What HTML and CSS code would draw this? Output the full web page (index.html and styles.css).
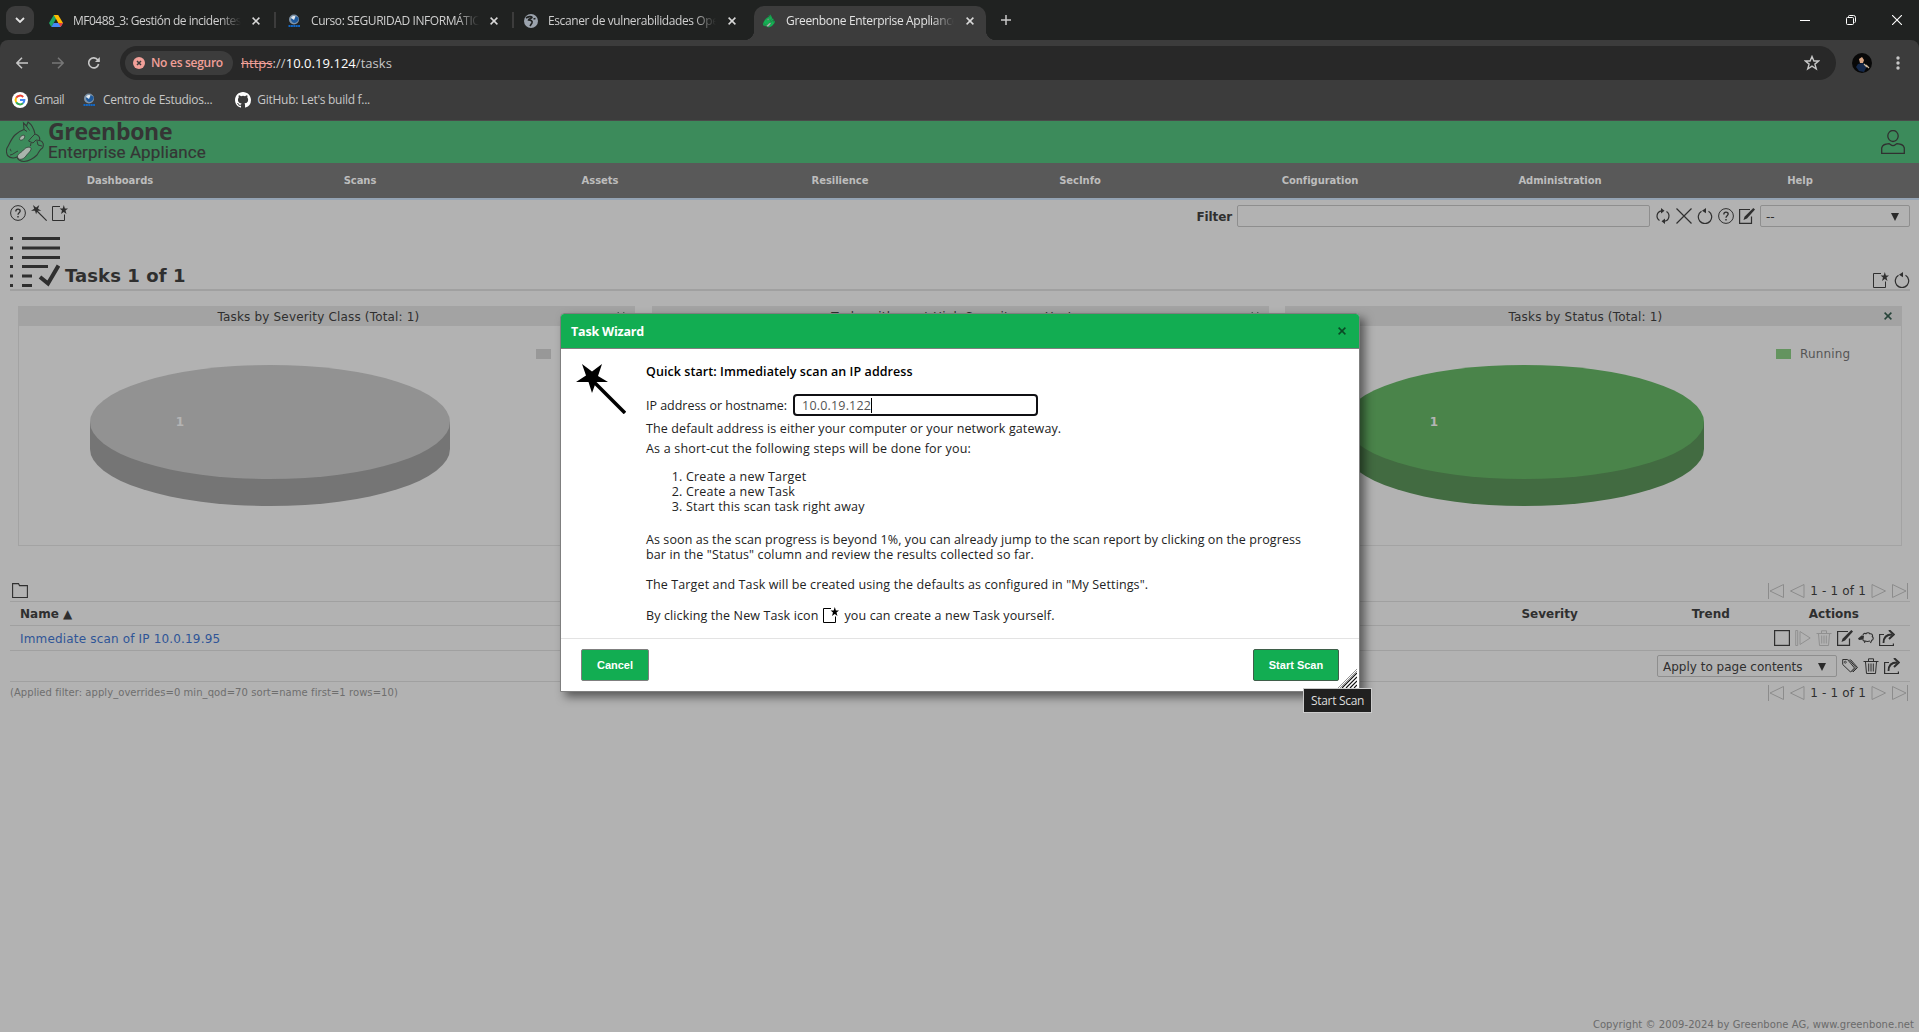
FILE: index.html
```html
<!DOCTYPE html>
<html lang="en">
<head>
<meta charset="utf-8">
<title>Greenbone Enterprise Appliance</title>
<link rel="stylesheet" href="styles.css">
</head>
<body>
<svg class="defs" width="0" height="0" aria-hidden="true">
  <defs>
    <symbol id="i-help" viewBox="0 0 16 16"><circle cx="8" cy="8" r="7.4" fill="none" stroke="currentColor"/><path d="M5.800 6.400C5.800 3.400 10.200 3.500 10.200 6.100C10.200 7.800 8 7.900 8 9.800" fill="none" stroke="currentColor" stroke-width="1.300"/><rect x="7.300" y="11" width="1.400" height="1.500" fill="currentColor"/></symbol>
    <symbol id="i-wand" viewBox="0 0 50 50"><path d="M6 0L16 7.500L26 0L22 12L32 18H20L16 29L12.500 18H0L10 11.500Z" fill="currentColor"/><path d="M18 18L49 49" stroke="currentColor" stroke-width="3.500"/></symbol>
    <symbol id="i-new" viewBox="0 0 16 16"><path d="M8 1.500H.5V15.500H12.500V9.500" fill="none" stroke="currentColor"/><path d="M11.800 0L12.900 3.500H16L13.500 5.500L14.500 9L11.800 7L9 9L10 5.500L7.600 3.500H10.700Z" fill="currentColor"/></symbol>
    <symbol id="i-update" viewBox="0 0 16 16"><path d="M6.500 2.800A5.300 5.300 0 0 0 4.500 12.500M9.500 13.200A5.300 5.300 0 0 0 11.500 3.500" fill="none" stroke="currentColor" stroke-width="1.200"/><path d="M6 0L9.500 2.700L6 5.500ZM10 10.500L6.500 13.300L10 16Z" fill="currentColor"/></symbol>
    <symbol id="i-x" viewBox="0 0 16 16"><path d="M.5 .5L15.500 15.500M15.500 .5L.5 15.500" stroke="currentColor" stroke-width="1.200"/></symbol>
    <symbol id="i-reset" viewBox="0 0 16 16"><path d="M4.500 3.200A6.700 6.700 0 1 0 11.500 3.200" fill="none" stroke="currentColor" stroke-width="1.200"/><path d="M5 2.800L9 0V5.200Z" fill="currentColor"/></symbol>
    <symbol id="i-edit" viewBox="0 0 16 16"><path d="M11 1.500H.6V15.400H12.500V8.500" fill="none" stroke="currentColor" stroke-width="1.200"/><path d="M14.300 0L16 1.600L8 10.500L4.500 12L5.500 8.800Z" fill="currentColor"/></symbol>
    <symbol id="i-trash" viewBox="0 0 16 16"><path d="M.5 3.500H15.500M5.500 3V.8H10.500V3M2.500 4L3.500 15.500H12.500L13.500 4M5.700 5.500V13.500M8 5.500V13.500M10.300 5.500V13.500" fill="none" stroke="currentColor"/></symbol>
    <symbol id="i-play" viewBox="0 0 16 16"><path d="M.7 .5V15.500H2.700V.5ZM5 1.500V14.500L15.200 8Z" fill="none" stroke="currentColor"/></symbol>
    <symbol id="i-sheep" viewBox="0 0 16 16"><path d="M5 5.500C5 3.500 7 3 8 3.700C9 2.500 11 2.500 12 3.800C14 3.500 15 5 14.300 6.500C16 8 15 10 13.800 10.200C13.500 11.500 13 11.500 12.500 13M6.500 12.800L7 11C9 11.800 10.500 11.500 12 11M5 9.500C5 11 6 11.200 7 11" fill="none" stroke="currentColor" stroke-width="1.100"/><path d="M0 8.500L3.500 5.500L6 6L5.500 9.500L1 10Z" fill="currentColor"/></symbol>
    <symbol id="i-export" viewBox="0 0 16 16"><path d="M5 4.500H.6V15.500H14.400V13.500" fill="none" stroke="currentColor" stroke-width="1.200"/><path d="M4.500 13C4.500 7.500 7.500 4.500 13 4.500" fill="none" stroke="currentColor" stroke-width="1.800"/><path d="M10 0L14.800 4.500L10 9" fill="none" stroke="currentColor" stroke-width="2"/></symbol>
    <symbol id="i-tag" viewBox="0 0 16 16"><path d="M.7 1.500V6.500L8.500 14L12.500 10L5.500 1.500Z" fill="none" stroke="currentColor"/><path d="M7 1.500L14 9.500L9.500 14M8.500 1.500L15.500 9.500L11 14" fill="none" stroke="currentColor"/><circle cx="3.300" cy="4.200" r="1" fill="none" stroke="currentColor" stroke-width=".8"/></symbol>
    <symbol id="i-first" viewBox="0 0 16 16"><path d="M.5 0V16M15.500 1.500V14.500L2 8Z" fill="none" stroke="currentColor"/></symbol>
    <symbol id="i-prev" viewBox="0 0 16 16"><path d="M15 1.500V14.500L1.500 8Z" fill="none" stroke="currentColor"/></symbol>
    <symbol id="i-next" viewBox="0 0 16 16"><path d="M1 1.500V14.500L14.500 8Z" fill="none" stroke="currentColor"/></symbol>
    <symbol id="i-last" viewBox="0 0 16 16"><path d="M15.500 0V16M.5 1.500V14.500L14 8Z" fill="none" stroke="currentColor"/></symbol>
    <symbol id="i-close" viewBox="0 0 8 8"><path d="M.6 .6L7.400 7.400M7.400 .6L.6 7.400" stroke="currentColor" stroke-width="1.500"/></symbol>
    <symbol id="i-globe" viewBox="0 0 14 14"><circle cx="7" cy="5.500" r="5" fill="#7d93a8"/><path d="M4 5C5 2 9 1 11.500 4C12 7 9 9 7 9C5 8.500 4 7 4 5Z" fill="#1f5a9c"/><path d="M4 4C5 2 7 1.500 8.500 2.500L7 6Z" fill="#e2e8ee"/><path d="M1.500 12H13" stroke="#1267c4" stroke-width="2" stroke-dasharray="2 .4"/></symbol>
    <symbol id="i-horse" viewBox="0 0 38 42"><path d="M1 27C3 24 5 18 9 14C12 11 15 9.500 18 8.500L17.500 2L20.500 5L22 1C25 3 28 8 29 13C32 14 34.500 16 33.500 19.500C37.500 20 38 24 36.500 27C34 28 33 31 31 34C28 37 23 40 18 40.500C14 40.500 11.500 38 11 36C8 37.500 4 37 1.500 34.500C.3 32 .3 29 1 27Z" class="horse-skin"/><path d="M18 8.500L21 10.500M20.500 5L23.500 9.500M29 13L25 17L22.500 20L27 22L30 19L33.500 19.500M31 20L32 24L36 25M25 22L24.500 25M5 28C4 28 4 30 5.500 30M4 34C7 34 9 31 12 30" fill="none" class="horse-line"/><path d="M11.500 36C11 33 15 32 17.500 29C20 26 23.500 25.500 25 27C25.500 30 22 32 20 35C17 39 12.500 39.500 11.500 36ZM13.500 18.500C13.500 15.500 17 13.500 18.500 14.500C19.500 17 16 20.500 13.500 18.500Z" class="horse-bone"/></symbol>
  </defs>
</svg>

<header class="browser">
  <div class="tabstrip">
    <div class="tabsearch"><svg width="10" height="6" viewBox="0 0 10 6"><path d="M1 1L5 5L9 1" fill="none" stroke="#e3e3e3" stroke-width="1.800"/></svg></div>
    <div class="tab tab-a">
      <svg class="fav" viewBox="0 0 14 14"><path d="M4.800 1H9.200L4.700 9L2.300 13L0 9Z" fill="#1fa463"/><path d="M4.800 1H9.200L14 9H9.300Z" fill="#ffba00"/><path d="M2.300 13L4.600 9H14L11.700 13Z" fill="#4688f4"/><path d="M9.300 9H14L11.700 13Z" fill="#ea4335"/></svg>
      <span class="tab-title">MF0488_3: Gestión de incidentes</span><svg class="tab-x"><use href="#i-close"/></svg>
    </div>
    <div class="tab tab-b">
      <svg class="fav"><use href="#i-globe"/></svg>
      <span class="tab-title">Curso: SEGURIDAD INFORMÁTICA</span><svg class="tab-x"><use href="#i-close"/></svg>
    </div>
    <div class="tab tab-c">
      <svg class="fav" viewBox="0 0 14 14"><circle cx="7" cy="7" r="7" fill="#9ba3ad"/><path d="M2 4C4 2.500 8 2 8 3.500C7 5 4.500 4.500 4.500 6C7 6 8.800 7 8 9L6 12M11.500 4.500L9.500 5" fill="none" stroke="#202221" stroke-width="1.600"/></svg>
      <span class="tab-title">Escaner de vulnerabilidades Open</span><svg class="tab-x"><use href="#i-close"/></svg>
    </div>
    <div class="tab tab-active">
      <svg class="fav horse-fav"><use href="#i-horse"/></svg>
      <span class="tab-title">Greenbone Enterprise Appliance</span><svg class="tab-x"><use href="#i-close"/></svg>
    </div>
    <svg class="newtab" viewBox="0 0 10 10"><path d="M5 0V10M0 5H10" stroke="#c8c8c8" stroke-width="1.500"/></svg>
    <div class="winctl">
      <svg width="10" height="10"><path d="M0 5.500H10" stroke="#fff"/></svg>
      <svg width="10" height="10" viewBox="0 0 10 10"><path d="M2.500 2V1.500Q2.500 .5 3.500 .5H7.500Q9.500 .5 9.500 2.500V6.500Q9.500 7.500 8.500 7.500" fill="none" stroke="#fff"/><rect x=".5" y="2.500" width="7" height="7" rx="1" fill="none" stroke="#fff"/></svg>
      <svg width="10" height="10"><path d="M0 0L10 10M10 0L0 10" stroke="#fff" stroke-width="1.100"/></svg>
    </div>
  </div>
  <div class="toolbar">
    <svg class="nav-back" viewBox="0 0 12 12"><path d="M12 6H1M6 .7L.9 6L6 11.300" fill="none" stroke="#c7c7c7" stroke-width="1.500"/></svg>
    <svg class="nav-fwd" viewBox="0 0 12 12"><path d="M0 6H11M6 .7L11.100 6L6 11.300" fill="none" stroke="#777" stroke-width="1.500"/></svg>
    <svg class="nav-reload" viewBox="0 0 12 12"><path d="M10.600 7A5 5 0 1 1 9.800 3L11 4.200" fill="none" stroke="#c7c7c7" stroke-width="1.600"/><path d="M11.800 0V5H7Z" fill="#c7c7c7"/></svg>
    <div class="omnibox">
      <div class="chip"><svg width="12" height="12"><circle cx="6" cy="6" r="6" fill="#f2a099"/><path d="M4 4L8 8M8 4L4 8" stroke="#3c3c3c" stroke-width="1.500"/></svg><span>No es seguro</span></div>
      <span class="url"><s>https</s><i>://</i><b>10.0.19.124</b><i>/tasks</i></span>
      <svg class="star" viewBox="0 0 16 16"><path d="M8 1.500L9.900 6H14.700L10.900 9.100L12.300 14L8 11.200L3.700 14L5.100 9.100L1.300 6H6.100Z" fill="none" stroke="#c7c7c7" stroke-width="1.400"/></svg>
    </div>
    <svg class="avatar" viewBox="0 0 20 20"><circle cx="10" cy="10" r="10" fill="#080808"/><path d="M6 11L11 10L15 13L12 19L7 18L4 14Z" fill="#14284a"/><path d="M7 6L10 4L12 7L11 10L8 10Z" fill="#d9a584"/><path d="M14 12L17 15M12 11L15 14" stroke="#cbb79c" stroke-width="1.200"/></svg>
    <svg class="kebab" width="4" height="14"><circle cx="2" cy="2" r="1.700" fill="#c7c7c7"/><circle cx="2" cy="7" r="1.700" fill="#c7c7c7"/><circle cx="2" cy="12" r="1.700" fill="#c7c7c7"/></svg>
  </div>
  <div class="bookmarks">
    <div class="bm bm-1"><svg width="16" height="16" viewBox="0 0 16 16"><circle cx="8" cy="8" r="8" fill="#fff"/><g fill="none" stroke-width="2"><path d="M4.200 5.800A4.400 4.400 0 0 1 11.200 5" stroke="#ea4335"/><path d="M4.200 5.800A4.400 4.400 0 0 0 4.200 10.200" stroke="#fbbc05"/><path d="M4.200 10.200A4.400 4.400 0 0 0 11 11.200" stroke="#34a853"/><path d="M11 11.200A4.400 4.400 0 0 0 12.400 8H8" stroke="#4285f4"/></g></svg><span>Gmail</span></div>
    <div class="bm bm-2"><svg width="14" height="14"><use href="#i-globe"/></svg><span>Centro de Estudios...</span></div>
    <div class="bm bm-3"><svg width="16" height="16" viewBox="0 0 16 16"><path fill="#fff" d="M8 0C3.580 0 0 3.580 0 8c0 3.540 2.290 6.530 5.470 7.590.4.070.55-.17.55-.38v-1.490c-2.010.37-2.530-.49-2.690-.94-.09-.23-.48-.94-.82-1.130-.28-.15-.68-.52-.01-.53.63-.01 1.080.58 1.230.82.72 1.210 1.870.87 2.330.66.07-.52.28-.87.51-1.070-1.780-.2-3.640-.89-3.640-3.950 0-.87.31-1.590.82-2.150-.08-.2-.36-1.020.08-2.120 0 0 .67-.21 2.200.82a7.600 7.600 0 0 1 4 0c1.530-1.040 2.200-.82 2.200-.82.44 1.100.16 1.920.08 2.120.51.560.82 1.270.82 2.150 0 3.070-1.870 3.750-3.650 3.950.29.250.54.730.54 1.480v2.200c0 .21.15.46.55.38A8 8 0 0 0 16 8c0-4.420-3.580-8-8-8Z"/></svg><span>GitHub: Let's build f...</span></div>
  </div>
</header>

<div class="brandbar">
  <svg class="brand-horse"><use href="#i-horse"/></svg>
  <div class="brand"><div class="brand-1">Greenbone</div><div class="brand-2">Enterprise Appliance</div></div>
  <svg class="user" viewBox="0 0 24 24"><ellipse cx="12" cy="6" rx="5.200" ry="5.500" fill="none" stroke="currentColor" stroke-width="1.300"/><path d="M.7 23.300V18C1.500 14.500 4 14 8 13.700C9 13.700 10 15.500 12 15.700C14 15.500 15 13.700 16 13.700C20 14 22.500 14.500 23.300 18V23.300Z" fill="none" stroke="currentColor" stroke-width="1.300"/></svg>
</div>
<nav class="menu"><a>Dashboards</a><a>Scans</a><a>Assets</a><a>Resilience</a><a>SecInfo</a><a>Configuration</a><a>Administration</a><a>Help</a></nav>

<main class="page">
  <div class="topline">
    <div class="icons"><svg><use href="#i-help"/></svg><svg><use href="#i-wand"/></svg><svg><use href="#i-new"/></svg></div>
    <div class="filter">
      <b class="filter-label">Filter</b><div class="field"></div>
      <div class="icons"><svg><use href="#i-update"/></svg><svg><use href="#i-x"/></svg><svg><use href="#i-reset"/></svg><svg><use href="#i-help"/></svg><svg><use href="#i-edit"/></svg></div>
      <div class="select select-filter"><span>--</span><i class="caret"></i></div>
    </div>
  </div>

  <div class="section">
    <svg class="section-icon" viewBox="0 0 50 50"><path d="M0 1.500H3M0 11H3M0 20.500H3M0 29.500H3M0 39H3M0 48.500H3" stroke="currentColor" stroke-width="3"/><path d="M12 1.500H50M12 11H50M12 20.500H50M12 29.500H38M12 39H22M12 48.500H22" stroke="currentColor" stroke-width="3"/><path d="M30 40L38 46.500L48.500 28.500" fill="none" stroke="currentColor" stroke-width="4"/></svg>
    <h1>Tasks 1 of 1</h1>
    <div class="icons"><svg><use href="#i-new"/></svg><svg><use href="#i-reset"/></svg></div>
  </div>

  <div class="charts">
    <section class="chart">
      <div class="chart-head"><span>Tasks by Severity Class (Total: 1)</span><svg><use href="#i-close"/></svg></div>
      <svg class="pie" viewBox="0 0 615 219"><path d="M71 96V123A180 57 0 0 0 431 123V96Z" fill="#757575"/><ellipse cx="251" cy="96" rx="180" ry="57" fill="#929292"/><text x="161" y="100">1</text><rect x="517" y="23" width="15" height="10" fill="#989898"/></svg>
    </section>
    <section class="chart">
      <div class="chart-head"><span>Tasks with most High Severity per Host</span><svg><use href="#i-close"/></svg></div>
    </section>
    <section class="chart">
      <div class="chart-head"><span>Tasks by Status (Total: 1)</span><svg><use href="#i-close"/></svg></div>
      <svg class="pie" viewBox="0 0 615 219"><path d="M58 96V123A180 57 0 0 0 418 123V96Z" fill="#426b41"/><ellipse cx="238" cy="96" rx="180" ry="57" fill="#4a844a"/><text x="148" y="100">1</text><rect x="490" y="23" width="15" height="10" fill="#64945f"/><text class="legend" x="514" y="32">Running</text></svg>
    </section>
  </div>

  <div class="listbar">
    <svg class="folder" viewBox="0 0 16 16"><path d="M.6 14.500V.6H6.500L7.500 2.600H15.400V14.500Z" fill="none" stroke="currentColor" stroke-width="1.100"/></svg>
    <div class="pager"><svg><use href="#i-first"/></svg><svg><use href="#i-prev"/></svg><span>1 - 1 of 1</span><svg><use href="#i-next"/></svg><svg><use href="#i-last"/></svg></div>
  </div>
  <div class="row row-head"><span>Name ▲</span><span class="c-sev">Severity</span><span class="c-trend">Trend</span><span class="c-act">Actions</span></div>
  <div class="row row-item"><span class="link">Immediate scan of IP 10.0.19.95</span>
    <div class="icons"><svg viewBox="0 0 16 16"><rect x=".6" y=".6" width="14.800" height="14.800" fill="none" stroke="currentColor" stroke-width="1.200"/></svg><svg class="off"><use href="#i-play"/></svg><svg class="off"><use href="#i-trash"/></svg><svg><use href="#i-edit"/></svg><svg><use href="#i-sheep"/></svg><svg><use href="#i-export"/></svg></div>
  </div>
  <div class="row row-bulk"><div class="select select-bulk"><span>Apply to page contents</span><i class="caret"></i></div><div class="icons"><svg><use href="#i-tag"/></svg><svg><use href="#i-trash"/></svg><svg><use href="#i-export"/></svg></div></div>
  <div class="listfoot">
    <span class="applied">(Applied filter: apply_overrides=0 min_qod=70 sort=name first=1 rows=10)</span>
    <div class="pager"><svg><use href="#i-first"/></svg><svg><use href="#i-prev"/></svg><span>1 - 1 of 1</span><svg><use href="#i-next"/></svg><svg><use href="#i-last"/></svg></div>
  </div>
  <footer class="copyright">Copyright © 2009-2024 by Greenbone AG, www.greenbone.net</footer>
</main>

<div class="dialog">
  <div class="dlg-head"><b>Task Wizard</b><svg><use href="#i-close"/></svg></div>
  <div class="dlg-body">
    <svg class="dlg-wand"><use href="#i-wand"/></svg>
    <div class="dlg-text">
      <p class="lead">Quick start: Immediately scan an IP address</p>
      <div class="host"><span>IP address or hostname:</span><div class="hostfield"><span>10.0.19.122</span><i class="cursor"></i></div></div>
      <p class="l1">The default address is either your computer or your network gateway.</p>
      <p class="l2">As a short-cut the following steps will be done for you:</p>
      <ol><li>Create a new Target</li><li>Create a new Task</li><li>Start this scan task right away</li></ol>
      <p class="l3">As soon as the scan progress is beyond 1%, you can already jump to the scan report by clicking on the progress<br><span>bar in the "Status" column and review the results collected so far.</span></p>
      <p class="l4">The Target and Task will be created using the defaults as configured in "My Settings".</p>
      <p class="l5"><span>By clicking the New Task icon</span><svg><use href="#i-new"/></svg><span>you can create a new Task yourself.</span></p>
    </div>
  </div>
  <div class="dlg-foot"><button class="btn">Cancel</button><button class="btn btn-go">Start Scan</button></div>
  <svg class="grip" viewBox="0 0 19 19"><path d="M4 19L19 4M8 19L19 8M12 19L19 12M16 19L19 16" stroke="#111" stroke-width="1.200"/><path d="M0 19L19 0M2 19L19 2" stroke="#777" stroke-width=".8"/></svg>
  <div class="tip">Start Scan</div>
</div>
</body>
</html>
```
FILE: styles.css
```css
* { box-sizing: border-box; }
body { margin: 0; width: 1919px; height: 1032px; overflow: hidden; position: relative; background: #b2b2b2; color: #2f2f2f; font: 12px/16px "DejaVu Sans", Verdana, sans-serif; letter-spacing: .17px; }
svg { display: block; flex: none; }
.defs { position: absolute; }
p, h1, ol { margin: 0; }

/* browser window */
.browser { height: 121px; background: #202221; font: 12px/16px "Open Sans", "Segoe UI", sans-serif; color: #c7c7c7; letter-spacing: -.28px; }
.tabstrip { height: 40px; display: flex; align-items: flex-start; }
.tabsearch { width: 28px; height: 28px; margin: 6px 0 0 6px; border-radius: 9px; background: #3c3c3c; display: grid; place-items: center; flex: none; }
.tab { display: flex; align-items: center; flex: none; width: 238px; height: 34px; margin-top: 6px; position: relative; padding-bottom: 4px; }
.tab-a { margin-left: 4px; padding-left: 11px; letter-spacing: -.5px; }
.tab-b { padding-left: 11px; letter-spacing: -.42px; }
.tab-a::after, .tab-b::after { content: ""; position: absolute; right: 0; top: 6px; width: 2px; height: 16px; background: #3c3c3c; }
.tab-c { width: 240px; padding-left: 10px; letter-spacing: -.4px; }
.tab-active { width: 232px; padding-left: 8px; background: #3c3c3c; border-radius: 10px 10px 0 0; letter-spacing: -.33px; }
.tab-active::before, .tab-active::after { content: ""; position: absolute; bottom: 0; width: 10px; height: 10px; }
.tab-active::before { left: -10px; background: radial-gradient(circle at 0 0, transparent 10px, #3c3c3c 10.500px); }
.tab-active::after { right: -10px; background: radial-gradient(circle at 100% 0, transparent 10px, #3c3c3c 10.500px); }
.fav { width: 14px; height: 14px; }
.tab-title { width: 168px; margin-left: 10px; overflow: hidden; white-space: nowrap; color: #cfcfcf; mask-image: linear-gradient(90deg, #000 146px, transparent 168px); }
.tab-active .tab-title { color: #e3e3e3; }
.tab-x { width: 8px; height: 8px; margin-left: 11px; color: #d8d8d8; }
.tab-c .tab-x, .tab-active .tab-x { margin-left: 12px; }
.newtab { width: 10px; height: 10px; margin: 15px 0 0 15px; }
.winctl { margin: 15px 17px 0 auto; display: flex; gap: 36px; }
.toolbar { height: 46px; background: #3c3c3c; border-radius: 8px 8px 0 0; padding-top: 6px; display: flex; align-items: flex-start; }
.nav-back, .nav-fwd, .nav-reload { width: 12px; height: 12px; margin-top: 11px; }
.nav-back { margin-left: 16px; }
.nav-fwd { margin-left: 24px; }
.nav-reload { margin-left: 24px; }
.omnibox { margin-left: 20px; width: 1716px; height: 34px; border-radius: 17px; background: #282828; display: flex; align-items: center; padding-left: 5px; }
.chip { width: 108px; height: 24px; border-radius: 12px; background: #3c3c3c; display: flex; align-items: center; padding-left: 8px; gap: 6px; color: #f2a099; font-weight: 600; white-space: nowrap; }
.url { margin-left: 8px; font-size: 13px; white-space: nowrap; letter-spacing: .04px; }
.url s { color: #f2a099; }
.url i { font-style: normal; color: #c7c7c7; }
.url b { font-weight: 400; color: #fff; }
.star { width: 16px; height: 16px; margin: 0 16px 0 auto; }
.avatar { width: 20px; height: 20px; margin: 7px 0 0 16px; }
.kebab { margin: 10px 0 0 24px; }
.bookmarks { height: 35px; background: #3c3c3c; border-bottom: 1px solid #4a4a4a; display: flex; align-items: flex-start; padding: 6px 0 0 12px; }
.bm { display: flex; align-items: center; gap: 6px; height: 16px; white-space: nowrap; }
.bm-1 { letter-spacing: -.5px; }
.bm-2 { margin-left: 18px; gap: 7px; }
.bm-3 { margin-left: 23px; }

/* product header */
.brandbar { height: 42px; background: #3c8b5b; display: flex; color: #353535; }
.brand-horse { width: 38px; height: 42px; margin-left: 6px; }
.horse-skin { fill: var(--skin, #3c8b5b); stroke: #353d38; stroke-width: 1.100; }
.horse-line { stroke: #353d38; stroke-width: 1; }
.horse-bone { fill: #a9b5ac; stroke: #353d38; stroke-width: .8; }
.horse-fav { --skin: #14b053; }
.brand { margin-left: 4px; white-space: nowrap; letter-spacing: 0; }
.brand-1 { font: 700 23px/21px "Open Sans", sans-serif; letter-spacing: -.3px; height: 21px; }
.brand-2 { font: 400 17px/18px Roboto, sans-serif; letter-spacing: .1px; margin-top: 1px; -webkit-text-stroke: .2px; }
.user { width: 24px; height: 24px; margin: 9px 14px 0 auto; color: #303030; }
.menu { height: 37px; background: #595959; border-bottom: 2px solid #94a3b3; display: grid; grid-template-columns: repeat(8, 240px); font: 700 10px/35px "DejaVu Sans", sans-serif; letter-spacing: -.05px; color: #bdbdbd; text-align: center; }

/* page content */
.page { height: 832px; padding: 5px 9px 0 10px; display: flex; flex-direction: column; }
.icons { display: flex; gap: 5px; }
.icons svg { width: 16px; height: 16px; }
.topline { display: flex; justify-content: space-between; height: 32px; flex: none; }
.filter { display: flex; align-items: flex-start; }
.filter .icons { margin: 3px 5px 0 5px; }
.filter-label { margin: 4px 5px 0 0; letter-spacing: -.1px; }
.field { width: 413px; height: 22px; border: 1px solid #8e8e8e; border-radius: 2px; }
.select { height: 22px; border: 1px solid #8e8e8e; border-radius: 2px; display: flex; justify-content: space-between; align-items: center; padding: 1px 10px 0 5px; white-space: nowrap; letter-spacing: 0; }
.select-filter { width: 150px; }
.caret { width: 0; border: 4px solid transparent; border-top: 8px solid #2a2a2a; border-bottom: 0; }
.section { height: 54px; flex: none; border-bottom: 2px solid #a0a0a0; display: flex; align-items: flex-start; }
.section-icon { width: 50px; height: 50px; }
h1 { font-size: 18px; line-height: 24px; letter-spacing: .1px; margin: 27px auto 0 5px; white-space: nowrap; }
.section .icons { margin-top: 35px; }
.charts { display: flex; gap: 16.500px; margin: 15px 0 0 8px; flex: none; }
.chart { width: 617px; height: 240px; border: 1px solid #a3a3a3; }
.chart-head { height: 19px; background: #a3a3a3; display: flex; align-items: center; justify-content: center; position: relative; white-space: nowrap; padding-right: 16px; }
.chart-head svg { position: absolute; right: 9px; top: 5px; width: 8px; height: 8px; color: #27443a; }
.pie { width: 615px; height: 219px; }
.pie text { font: 700 12px "DejaVu Sans", sans-serif; fill: #b4b4b4; text-anchor: middle; }
.pie .legend { font-weight: 400; fill: #555; text-anchor: start; }
.listbar { height: 55px; flex: none; display: flex; justify-content: space-between; align-items: flex-end; padding: 0 2px 2px; }
.folder { width: 16px; height: 16px; }
.pager { display: flex; align-items: center; gap: 5px; white-space: nowrap; }
.pager span { padding-top: 1px; line-height: 15px; }
.pager svg { width: 16px; height: 16px; color: #8c8c8c; }
.row { border-top: 1px solid #a0a0a0; display: flex; align-items: center; flex: none; white-space: nowrap; }
.row-head { height: 24px; font-weight: 700; padding-left: 10px; letter-spacing: 0; }
.c-sev { margin-left: auto; }
.c-trend { margin-left: 114px; }
.c-act { margin: 0 51px 0 79px; }
.row-item { height: 25px; justify-content: space-between; padding: 0 15px 0 10px; }
.link { color: #2f5597; padding-top: 2px; }
.off { color: #909090; }
.row-bulk { height: 32px; justify-content: flex-end; padding-right: 10px; gap: 5px; border-bottom: 1px solid #a0a0a0; }
.select-bulk { width: 180px; }
.listfoot { display: flex; justify-content: space-between; align-items: center; height: 22px; padding-right: 2px; }
.applied { font-size: 10px; color: #6e6e6e; white-space: nowrap; letter-spacing: .06px; }
.copyright { margin: auto -4px -1px auto; font-size: 10px; line-height: 16px; color: #6a6a6a; white-space: nowrap; letter-spacing: .06px; }

/* wizard dialog, over the page */
.dialog { position: absolute; left: 560px; top: 313px; width: 800px; height: 379px; background: #fff; border: 1px solid #7f7f7f; border-radius: 4px 4px 0 0; box-shadow: 5px 5px 10px rgba(0,0,0,.5); color: #222; font: 12.500px/15px "Open Sans", "Trebuchet MS", sans-serif; letter-spacing: .12px; white-space: nowrap; }
.dlg-head { height: 35px; background: #12ad52; border-bottom: 1px solid #7f7f7f; border-radius: 3px 3px 0 0; display: flex; align-items: center; justify-content: space-between; padding: 0 13px 0 10px; color: #fff; letter-spacing: -.2px; }
.dlg-head svg { width: 8px; height: 8px; color: #0a4a25; }
.dlg-body { height: 290px; border-bottom: 1px solid #e3e3e3; display: flex; padding: 15px 0 0 15px; }
.dlg-wand { width: 50px; height: 50px; color: #000; }
.dlg-text { margin-left: 20px; }
.lead { color: #000; font-weight: 600; letter-spacing: .07px; }
.host { display: flex; align-items: center; gap: 6px; height: 22px; margin-top: 15px; letter-spacing: -.03px; }
.hostfield { width: 245px; height: 22px; border: 2px solid #101014; border-radius: 4px; display: flex; align-items: center; padding-left: 7px; color: #555; letter-spacing: .18px; }
.cursor { width: 1px; height: 15px; background: #000; }
.l1 { margin-top: 5px; }
.l2 { margin-top: 5px; letter-spacing: .19px; }
ol { margin: 13px 0; padding-left: 40px; letter-spacing: .19px; }
.l3 { margin-top: 18px; letter-spacing: .087px; }
.l3 span { letter-spacing: .132px; }
.l4 { margin-top: 15px; }
.l5 { margin-top: 15px; display: flex; align-items: center; }
.l5 svg { width: 16px; height: 16px; margin: 0 5px; color: #000; }
.dlg-foot { display: flex; justify-content: space-between; padding: 10px 20px; }
.btn { height: 32px; width: 68px; padding: 0; background: #12ad52; border: 1px solid #7f7f7f; border-radius: 2px; color: #fff; font: 700 11px "Liberation Sans", Arial, sans-serif; }
.btn-go { width: 86px; border-color: #3f5f4a; }
.grip { position: absolute; right: 2px; bottom: 3px; width: 19px; height: 19px; }
.tip { position: absolute; left: 742px; top: 374px; width: 69px; height: 25px; background: #202020; border: 1px solid #ccc; color: #ddd; font: 12px/23px "Open Sans", "Segoe UI", sans-serif; letter-spacing: -.3px; text-align: center; }
```
